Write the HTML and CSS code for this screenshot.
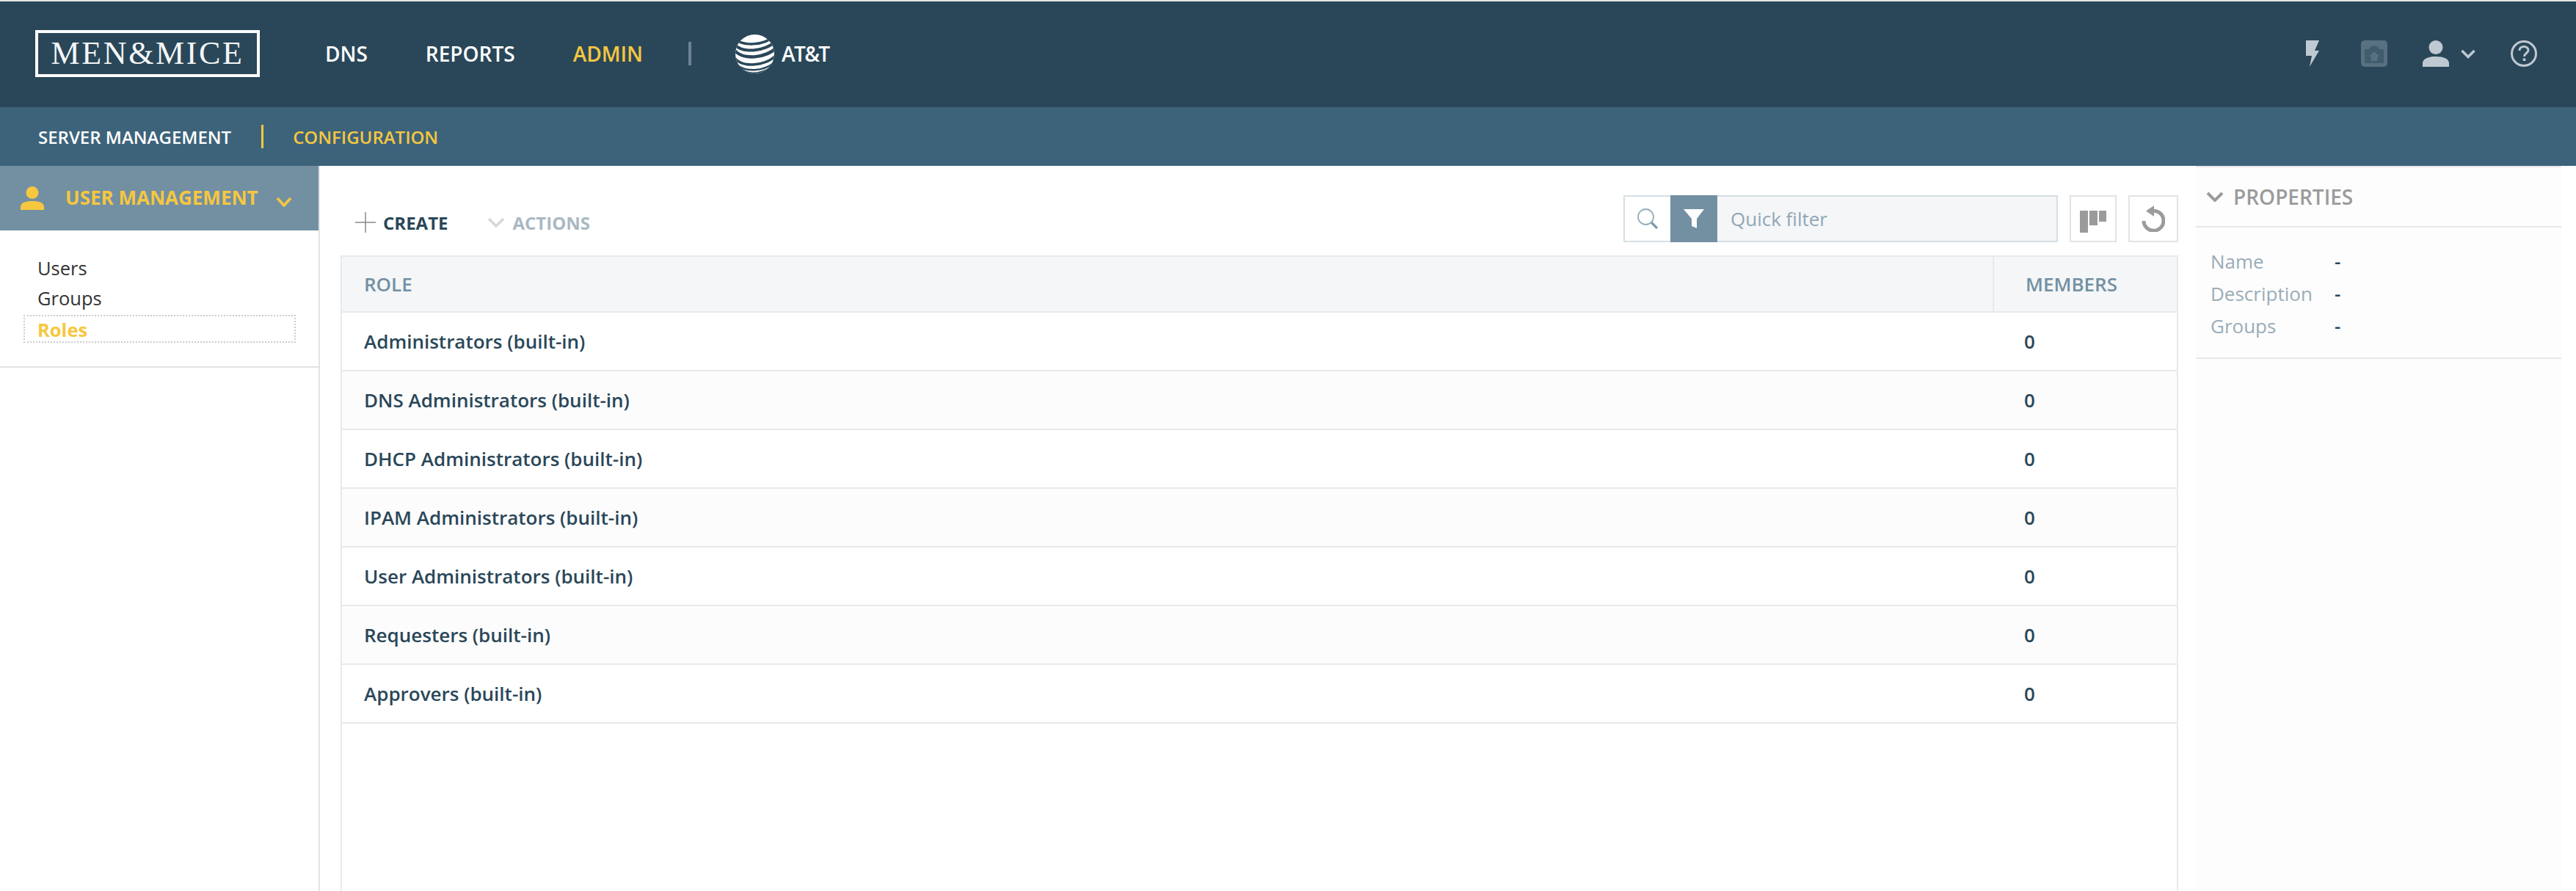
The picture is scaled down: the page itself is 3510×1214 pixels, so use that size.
FILE: index.html
```html
<!DOCTYPE html>
<html lang="en">
<head>
<meta charset="utf-8">
<title>Men&amp;Mice - Roles</title>
<link rel="stylesheet" href="styles.css">
</head>
<body>
<div class="page">
  <header class="topbar">
    <div class="logo">MEN&amp;MICE</div>
    <nav class="mainnav">
      <a class="nav-dns">DNS</a>
      <a class="nav-reports">REPORTS</a>
      <a class="nav-admin active">ADMIN</a>
    </nav>
    <span class="nav-sep"></span>
    <div class="att">
      <svg class="att-globe" width="53" height="53" viewBox="0 0 53 53">
        <defs><clipPath id="g"><circle cx="26.5" cy="26.5" r="26.5"/></clipPath></defs>
        <circle cx="26.5" cy="26.5" r="26.5" fill="#fff"/>
        <g clip-path="url(#g)" fill="none" stroke="#2a4759">
          <path d="M-2 5C8 16 40 16 52 2" stroke-width="3.5"/>
          <path d="M-3 11C6 27 42 24 56 8" stroke-width="4"/>
          <path d="M-3 19C8 37 44 32 57 17" stroke-width="4.5"/>
          <path d="M-2 31C10 47 42 42 56 28" stroke-width="3.5"/>
          <path d="M2 41C14 52 38 50 52 39" stroke-width="2.5"/>
          <path d="M6 46C18 55 34 54 48 45" stroke-width="1.5"/>
          <path d="M10 51C20 56 32 56 44 49" stroke-width="1"/>
        </g>
      </svg>
      <span class="att-text">AT&amp;T</span>
    </div>
    <div class="top-icons">
      <svg class="ic-bolt" width="18" height="36" viewBox="0 0 18 36"><path d="M0 0H18L12 14H18L5 36L8 21H0Z" fill="#bfc9d1"/></svg>
      <svg class="ic-upload" width="36" height="36" viewBox="0 0 36 36"><rect width="36" height="36" rx="5" fill="#577180"/><path d="M5 31V12H11A7.500 7 0 0 1 25 12H31V31Z" fill="#2a4759" opacity="0.5"/><path d="M18 15L25.500 22H22.500V28H13.500V22H10.500Z" fill="#577180"/></svg>
      <span class="user-menu">
        <svg width="36" height="36" viewBox="0 0 36 36"><circle cx="18" cy="9.5" r="9.5" fill="#bfc9d1"/><path d="M0 36V31C0 25 8 22 18 22S36 25 36 31V36Z" fill="#bfc9d1"/></svg>
        <svg width="20" height="13" viewBox="0 0 20 13"><path d="M1.500 2L10 10.500L18.500 2" fill="none" stroke="#bfc9d1" stroke-width="3.500"/></svg>
      </span>
      <svg class="ic-help" width="36" height="36" viewBox="0 0 36 36"><circle cx="18" cy="18" r="16.500" fill="none" stroke="#bfc9d1" stroke-width="3"/><path d="M12 14C12 10 15 8.500 18 8.500C21.500 8.500 24 10.500 24 13.500C24 17.500 18.500 17.500 18.500 22" fill="none" stroke="#bfc9d1" stroke-width="3"/><rect x="16.800" y="24.500" width="3.500" height="3.500" fill="#bfc9d1"/></svg>
    </div>
  </header>
  <div class="subbar">
    <a class="sub-item">SERVER MANAGEMENT</a>
    <span class="sub-sep"></span>
    <a class="sub-item active">CONFIGURATION</a>
  </div>
  <div class="main">
    <aside class="sidebar">
      <div class="side-head">
        <svg width="32" height="32" viewBox="0 0 32 32"><ellipse cx="16" cy="8.500" rx="8.500" ry="8.500" fill="#f6c73f"/><path d="M0 32V28C0 22 7 20 16 20S32 22 32 28V32Z" fill="#f6c73f"/></svg>
        <span class="side-title">USER MANAGEMENT</span>
        <svg class="side-chev" width="22" height="14" viewBox="0 0 22 14"><path d="M2 2L11 12L20 2" fill="none" stroke="#f6c73f" stroke-width="3.500"/></svg>
      </div>
      <ul class="side-list">
        <li>Users</li>
        <li>Groups</li>
        <li class="current">Roles</li>
      </ul>
    </aside>
    <section class="content">
      <div class="toolbar">
        <div class="tb-actions">
          <button class="tb-btn create"><svg width="28" height="28" viewBox="0 0 28 28"><path d="M14 0V28M0 14H28" stroke="#8a8a8a" stroke-width="1.500"/></svg>CREATE</button>
          <button class="tb-btn actions"><svg width="24" height="14" viewBox="0 0 24 14"><path d="M2 2L12 12L22 2" fill="none" stroke="#d4d8da" stroke-width="3.500"/></svg>ACTIONS</button>
        </div>
        <div class="tb-filter">
          <div class="filter">
            <span class="f-search"><svg width="30" height="30" viewBox="0 0 30 30"><circle cx="12.500" cy="12.500" r="10.500" fill="none" stroke="#95adbb" stroke-width="1.800"/><path d="M20 20L28 28" stroke="#7f9cad" stroke-width="3.200"/></svg></span>
            <span class="f-funnel"><svg width="28" height="28" viewBox="0 0 28 28"><path d="M0 1H28L18 14V27L11 24V14Z" fill="#fff"/></svg></span>
            <span class="f-input">Quick filter</span>
          </div>
          <span class="icon-btn b1"><svg width="36" height="30" viewBox="0 0 36 30"><path d="M0 0H11V30H0ZM13 0H24V20H13ZM26 0H36V15H26Z" fill="#9b9b9b"/></svg></span>
          <span class="icon-btn b2"><svg width="32" height="36" viewBox="0 0 32 36"><path d="M14 7.500A13.500 13.500 0 1 1 3 21" fill="none" stroke="#9b9b9b" stroke-width="5"/><path d="M17 0V15L6 7.500Z" fill="#9b9b9b"/></svg></span>
        </div>
      </div>
      <div class="table">
        <div class="t-row t-head"><div class="c-role">ROLE</div><div class="c-mem">MEMBERS</div></div>
        <div class="t-row"><div class="c-role">Administrators (built-in)</div><div class="c-mem">0</div></div>
        <div class="t-row"><div class="c-role">DNS Administrators (built-in)</div><div class="c-mem">0</div></div>
        <div class="t-row"><div class="c-role">DHCP Administrators (built-in)</div><div class="c-mem">0</div></div>
        <div class="t-row"><div class="c-role">IPAM Administrators (built-in)</div><div class="c-mem">0</div></div>
        <div class="t-row"><div class="c-role">User Administrators (built-in)</div><div class="c-mem">0</div></div>
        <div class="t-row"><div class="c-role">Requesters (built-in)</div><div class="c-mem">0</div></div>
        <div class="t-row"><div class="c-role">Approvers (built-in)</div><div class="c-mem">0</div></div>
      </div>
    </section>
    <aside class="props">
      <div class="props-head">
        <svg width="24" height="14" viewBox="0 0 24 14"><path d="M2 2L12 12L22 2" fill="none" stroke="#9b9b9b" stroke-width="4"/></svg>
        <span>PROPERTIES</span>
      </div>
      <dl class="props-list">
        <div class="p-row"><dt>Name</dt><dd>-</dd></div>
        <div class="p-row"><dt>Description</dt><dd>-</dd></div>
        <div class="p-row"><dt>Groups</dt><dd>-</dd></div>
      </dl>
    </aside>
  </div>
</div>
</body>
</html>
```
FILE: styles.css
```css
* { box-sizing: border-box; }
html, body { margin: 0; padding: 0; height: 100%; }
body { background: #fff; font-family: "Open Sans", "Noto Sans", sans-serif; overflow: hidden; }
.page { height: 1214px; display: flex; flex-direction: column; border-top: 2px solid #e6e6e6; }

.topbar { height: 144px; flex: none; background: #2a4759; display: flex; align-items: center; padding-left: 48px; padding-bottom: 2px; color: #fff; }
.logo { width: 306px; height: 64px; border: 4px solid #fff; display: flex; align-items: center; justify-content: center; font-family: "Liberation Serif", serif; font-size: 44px; letter-spacing: 2.6px; color: #f4f6f7; line-height: 1; }
.mainnav { display: flex; margin-left: 89px; font-size: 28px; font-weight: 600; }
.nav-reports { margin-left: 79px; }
.nav-admin { margin-left: 79px; }
.active { color: #f6c73f; }
.nav-sep { width: 4px; height: 32px; background: #6c8393; margin-left: 62px; }
.att { display: flex; align-items: center; margin-left: 60px; }
.att-text { margin-left: 10px; font-size: 28px; font-weight: 600; letter-spacing: -1.6px; }
.top-icons { margin-left: auto; display: flex; align-items: center; margin-right: 53px; }
.ic-upload { margin-left: 57px; }
.user-menu { display: flex; align-items: center; gap: 16px; margin-left: 48px; }
.ic-help { margin-left: 48px; }

.subbar { height: 80px; flex: none; background: #3d637b; display: flex; align-items: center; padding-left: 52px; color: #fff; font-size: 24px; font-weight: 600; }
.sub-sep { width: 3px; height: 32px; background: #f6c73f; margin: 0 40px 0 41px; }

.main { flex: 1; display: flex; min-height: 0; }

.sidebar { width: 436px; flex: none; border-right: 2px solid #e3e3e3; }
.side-head { height: 88px; background: #7390a3; display: flex; align-items: center; padding-left: 28px; color: #f6c73f; font-size: 26px; font-weight: 700; }
.side-title { margin-left: 29px; position: relative; top: -1px; }
.side-chev { margin-left: 24px; position: relative; top: 5px; }
.side-list { list-style: none; margin: 0; padding: 30px 31px 32px 32px; border-bottom: 2px solid #e3e3e3; font-size: 25.500px; color: #333; }
.side-list li { height: 41px; line-height: 38px; padding-left: 17px; border: 2px solid transparent; }
.side-list li.current { height: 38px; margin-top: 3px; line-height: 36px; color: #f6c73f; font-weight: 700; border: 2px dotted #ccc; }

.content { flex: none; width: 2532px; padding-left: 28px; display: flex; flex-direction: column; }
.toolbar { height: 122px; flex: none; display: flex; justify-content: space-between; position: relative; }
.tb-actions { display: flex; align-items: center; padding-top: 32px; height: 122px; padding-left: 20px; }
.tb-btn { background: none; border: 0; padding: 0; font: 700 24px "Open Sans", sans-serif; display: flex; align-items: center; }
.create { color: #2a4759; gap: 10px; }
.actions { color: #a9b8c2; gap: 10px; margin-left: 54px; }
.tb-filter { display: flex; padding-top: 40px; height: 104px; box-sizing: content-box; }
.filter { display: flex; width: 592px; height: 64px; border: 2px solid #d6dfe4; }
.f-search { width: 62px; display: flex; align-items: center; justify-content: center; background: #fff; }
.f-funnel { width: 64px; margin: -2px 0; display: flex; align-items: center; justify-content: center; background: #7390a3; }
.f-input { flex: 1; background: #f4f6f8; padding-left: 18px; font-size: 26px; line-height: 60px; color: #92a7b5; }
.icon-btn { height: 64px; border: 2px solid #e3e3e3; display: flex; align-items: center; justify-content: center; margin-left: 16px; background: #fff; }
.b1 { width: 64px; }
.b2 { width: 68px; }
.b1 svg { margin-top: 8px; }

.table { flex: 1; border: 2px solid #e8e9ea; border-bottom: 0; font-size: 26px; }
.t-row { display: flex; height: 80px; border-bottom: 2px solid #e8e9ea; font-weight: 600; color: #2a4759; align-items: center; }
.t-row:nth-child(odd) { background: #fcfcfc; }
.t-row.t-head { height: 76px; background: #f4f6f8; color: #7390a3; }
.c-role { flex: 1; padding-left: 30px; }
.c-mem { width: 251px; padding-left: 43px; }
.t-head .c-mem { height: 100%; border-left: 2px solid #e8e9ea; display: flex; align-items: center; }

.props { width: 498px; margin-left: 24px; flex: none; background: #fdfdfd; }
.props-head { height: 84px; border-top: 2px solid #e8e8e8; border-bottom: 2px solid #e8e8e8; display: flex; align-items: center; padding-left: 14px; font-size: 28px; font-weight: 600; color: #9b9b9b; gap: 13px; }
.props-list { margin: 0; padding: 24px 0 21px 20px; border-bottom: 2px solid #e8e8e8; font-size: 26px; }
.p-row { display: flex; height: 44px; line-height: 44px; }
.p-row dt { width: 169px; color: #9aacb8; }
.p-row dd { margin: 0; color: #2a4759; font-weight: 600; }
```
